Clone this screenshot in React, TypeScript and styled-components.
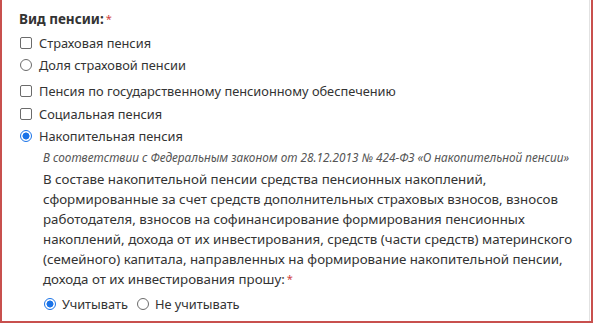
import React from "react";
import styled, { createGlobalStyle } from "styled-components";

const Global = createGlobalStyle`
  html, body { margin: 0; padding: 0; background: #fff; }
  body { font-family: "Noto Sans", "Open Sans", sans-serif; color: #333; }
`;

const Frame = styled.div`
  width: 593px;
  height: 323px;
  box-sizing: border-box;
  border: 2px solid #c8504e;
  border-top: none;
  background: #fff;
  overflow: hidden;
`;

const Inner = styled.div`
  height: 100%;
  box-sizing: border-box;
  margin-right: 1px;
  border-right: 1px solid #e2e2e2;
  padding: 10px 0 0 17px;
`;

const Title = styled.div`
  font-size: 13.5px;
  font-weight: 700;
  line-height: 18px;
  color: #333;
  margin-bottom: 6px;
`;

const Req = styled.span`
  color: #d0413e;
  font-weight: 400;
  font-size: 11px;
  vertical-align: top;
  margin-left: 2px;
`;

const Option = styled.label<{ $gap?: number }>`
  display: flex;
  align-items: center;
  gap: 7px;
  font-size: 12.8px;
  line-height: 18px;
  height: 18px;
  margin-top: ${(p) => p.$gap ?? 4}px;
  color: #333;
`;

const Box = styled.span`
  width: 10px;
  height: 10px;
  border: 1px solid #6b6b6b;
  border-radius: 2px;
  flex: none;
  margin-left: 1px;
`;

const Radio = styled.span<{ $checked?: boolean }>`
  width: 10px;
  height: 10px;
  border-radius: 50%;
  flex: none;
  margin-left: 1px;
  box-sizing: content-box;
  border: 1px solid ${(p) => (p.$checked ? "#1a73e8" : "#6b6b6b")};
  background: ${(p) =>
    p.$checked ? "radial-gradient(circle, #1a73e8 0 3.2px, #fff 3.8px)" : "#fff"};
`;

const Sub = styled.div`
  padding-left: 24px;
`;

const Note = styled.div`
  font-size: 11.8px;
  font-style: italic;
  color: #555;
  line-height: 16px;
  margin-top: 4px;
`;

const Para = styled.div`
  font-size: 13.3px;
  line-height: 20px;
  color: #333;
  margin-top: 4px;
  width: 530px;
`;

const Inline = styled.div`
  display: flex;
  gap: 8px;
  margin-top: 6px;
`;

const InlineOption = styled(Option)`
  margin-top: 0;
  gap: 6px;
`;

export default function App() {
  return (
    <>
      <Global />
      <Frame>
        <Inner>
          <Title>
            Вид пенсии:<Req>*</Req>
          </Title>
          <Option $gap={0}>
            <Box />
            Страховая пенсия
          </Option>
          <Option>
            <Radio />
            Доля страховой пенсии
          </Option>
          <Option $gap={8}>
            <Box />
            Пенсия по государственному пенсионному обеспечению
          </Option>
          <Option $gap={5}>
            <Box />
            Социальная пенсия
          </Option>
          <Option>
            <Radio $checked />
            Накопительная пенсия
          </Option>
          <Sub>
            <Note>
              В соответствии с Федеральным законом от 28.12.2013 № 424-ФЗ «О накопительной пенсии»
            </Note>
            <Para>
              В составе накопительной пенсии средства пенсионных накоплений,
              <br />
              сформированные за счет средств дополнительных страховых взносов, взносов
              <br />
              работодателя, взносов на софинансирование формирования пенсионных
              <br />
              накоплений, дохода от их инвестирования, средств (части средств) материнского
              <br />
              (семейного) капитала, направленных на формирование накопительной пенсии,
              <br />
              дохода от их инвестирования прошу:<Req>*</Req>
            </Para>
            <Inline>
              <InlineOption>
                <Radio $checked />
                Учитывать
              </InlineOption>
              <InlineOption>
                <Radio />
                Не учитывать
              </InlineOption>
            </Inline>
          </Sub>
        </Inner>
      </Frame>
    </>
  );
}
